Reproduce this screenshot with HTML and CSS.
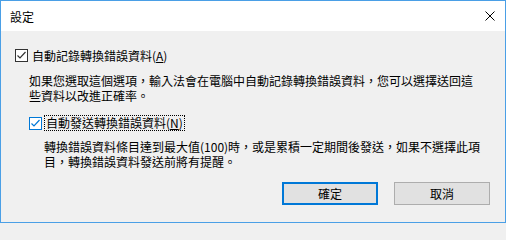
FILE: index.html
```html
<!DOCTYPE html>
<html lang="zh-Hant">
<head>
<meta charset="utf-8">
<title>設定</title>
<link rel="stylesheet" href="styles.css">
</head>
<body>
<div class="window">
  <div class="titlebar">
    <span class="title">設定</span>
    <svg class="close" width="10" height="10" viewBox="0 0 10 10"><path d="M0.5 0.5 L9.5 9.5 M9.5 0.5 L0.5 9.5" stroke="#000" stroke-width="1" fill="none"/></svg>
  </div>
  <div class="content">
    <div class="row row-first">
      <span class="box">
        <svg width="11" height="11" viewBox="0 0 11 11"><path d="M1.5 5.5 L4 8 L9.5 2" stroke="#333" stroke-width="1.2" fill="none"/></svg>
      </span>
      <span class="label">自動記錄轉換錯誤資料(<u>A</u>)</span>
    </div>
    <p class="desc desc-first">如果您選取這個選項，輸入法會在電腦中自動記錄轉換錯誤資料，您可以選擇送回這些資料以改進正確率。</p>
    <div class="row row-second">
      <span class="box box-focus">
        <svg width="11" height="11" viewBox="0 0 11 11"><path d="M1.5 5.5 L4 8 L9.5 2" stroke="#0078d7" stroke-width="1.2" fill="none"/></svg>
      </span>
      <span class="label focus">自動發送轉換錯誤資料(<u>N</u>)</span>
    </div>
    <p class="desc desc-second">轉換錯誤資料條目達到最大值(100)時，或是累積一定期間後發送，如果不選擇此項目，轉換錯誤資料發送前將有提醒。</p>
    <div class="buttons">
      <button class="btn btn-default">確定</button>
      <button class="btn">取消</button>
    </div>
  </div>
</div>
</body>
</html>
```
FILE: styles.css
```css
html, body {
  margin: 0;
  padding: 0;
  background: #f0f0f0;
}
.window {
  width: 506px;
  height: 223px;
  box-sizing: border-box;
  border: 1px solid #4a9fe6;
  background: #f0f0f0;
  font-family: "Noto Sans CJK TC", "Noto Sans", sans-serif;
  font-size: 12px;
  line-height: 15px;
  color: #000;
  display: flex;
  flex-direction: column;
}
.titlebar {
  height: 30px;
  background: #fff;
  display: flex;
  align-items: center;
  justify-content: space-between;
  padding: 0 10px 0 9px;
  flex-shrink: 0;
}
.title {
  font-size: 12px;
  line-height: 15px;
}
.close {
  display: block;
}
.content {
  padding: 17px 23px 0 14px;
  display: flex;
  flex-direction: column;
}
.row {
  display: flex;
  align-items: center;
}
.row-first {
  height: 15px;
}
.row-second {
  height: 16px;
  margin-top: 12px;
  margin-left: 14px;
}
.box {
  width: 13px;
  height: 13px;
  box-sizing: border-box;
  border: 1px solid #333;
  background: #fff;
  display: flex;
  align-items: center;
  justify-content: center;
  flex-shrink: 0;
}
.box svg {
  display: block;
}
.box-focus {
  border-color: #0078d7;
}
.label {
  margin-left: 4px;
  white-space: nowrap;
}
.label u {
  text-underline-offset: 1px;
}
.focus {
  margin-left: 2px;
  border: 1px dotted #000;
  padding: 0 1px;
  height: 14px;
  line-height: 14px;
}
.desc {
  margin: 0;
}
.desc-first {
  margin-top: 10px;
  margin-left: 14px;
}
.desc-second {
  margin-top: 8px;
  margin-left: 29px;
}
.buttons {
  display: flex;
  justify-content: flex-end;
  gap: 16px;
  margin-top: 13px;
  margin-right: -8px;
}
.btn {
  width: 96px;
  height: 23px;
  box-sizing: border-box;
  border: 1px solid #adadad;
  background: #e1e1e1;
  font-family: "Noto Sans CJK TC", "Noto Sans", sans-serif;
  font-size: 12px;
  line-height: 15px;
  color: #000;
  padding: 0;
  margin: 0;
}
.btn-default {
  border: 2px solid #0078d7;
}
```
